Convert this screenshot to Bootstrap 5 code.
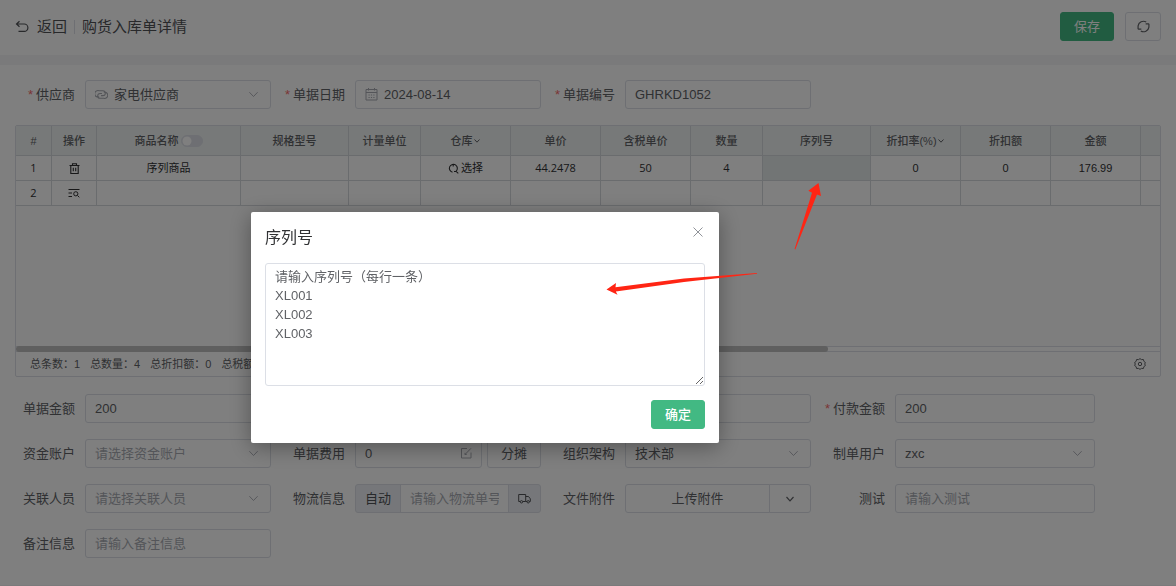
<!DOCTYPE html>
<html lang="zh-CN">
<head>
<meta charset="utf-8">
<meta name="viewport" content="width=device-width, initial-scale=1">
<title>购货入库单详情</title>
<link href="https://cdn.jsdelivr.net/npm/bootstrap@5.3.0/dist/css/bootstrap.min.css" rel="stylesheet">
<style>
  body { background: #f4f4f6; color: #606266; font-family: "Liberation Sans", "Noto Sans CJK SC", sans-serif; font-size: 13px; line-height: 19px; overflow-x: hidden; }
  svg { display: block; fill: none; stroke: currentColor; flex: none; }
  .topbar { height: 55px; padding: 0 15px 2px; font-size: 15px; }
  .topbar a { color: #505256; }
  .topbar h1 { font-size: 15px; font-weight: 400; color: #505256; }
  .topbar .btn-plain { width: 36px; margin-left: 11px; }
  .divider { width: 1px; height: 14px; background: #dcdfe6; margin: 0 7px; }
  .panel { margin-top: 10px; padding-top: 15px; min-height: calc(100vh - 66px); }
  .btn { --bs-btn-font-size: 13px; --bs-btn-padding-y: 0; --bs-btn-border-radius: 3px; height: 29px; line-height: 19px; }
  .btn-main { --bs-btn-bg: #42b983; --bs-btn-border-color: #42b983; --bs-btn-color: #fff; --bs-btn-hover-bg: #3aa876; --bs-btn-hover-color: #fff; width: 54px; padding: 0; }
  .btn-main.strong { font-weight: 500; }
  .btn-plain { --bs-btn-bg: #fff; --bs-btn-border-color: #dcdfe6; --bs-btn-color: #606266; --bs-btn-hover-bg: #f5f7fa; padding: 0; }
  .btn-split { width: 54px; }
  .btn-more { width: 42px; }
  .fields { display: grid; grid-template-columns: 257fr 257fr 257fr 271fr; column-gap: 13px; row-gap: 16px; padding: 0 81px 0 14px; }
  .field { display: flex; align-items: center; min-width: 0; }
  .field > label, .field > .caption { width: 71px; padding-right: 10px; text-align: right; white-space: nowrap; flex: none; }
  .field .body { flex: 1; min-width: 0; position: relative; }
  .need::before { content: "*"; color: #f56c6c; margin-right: 3px; }
  .form-control, .form-select { height: 29px; padding: 0 9px; border-color: #dcdfe6; border-radius: 3px; font-size: 13px; line-height: 19px; color: #606266; }
  .form-control::placeholder { color: #a8abb2; opacity: 1; }
  .form-select { background-image: url("data:image/svg+xml,%3Csvg xmlns='http://www.w3.org/2000/svg' viewBox='0 0 12 12'%3E%3Cpath d='M1.5 3.5 6 8.2l4.500-4.700' fill='none' stroke='%23a8abb2'/%3E%3C/svg%3E"); background-size: 11px 11px; background-position: right 11px center; }
  .form-select.empty { color: #a8abb2; }
  .prefixed { padding-left: 28px; }
  .lead-icon, .tail-icon { position: absolute; top: 8px; color: #a8abb2; pointer-events: none; }
  .lead-icon { left: 10px; }
  .tail-icon { right: 10px; }
  .input-group-text { font-size: 13px; line-height: 19px; padding: 0 9px; background: #eceff5; border-color: #dcdfe6; color: #505256; border-radius: 3px; }
  .sheet { margin: 16px 15px 17px; border: 1px solid #dcdfe6; font-size: 11px; line-height: 16px; border-radius: 2px; }
  .sheet-body { height: 220px; overflow: hidden; background: #fcfcfc; }
  .sheet table { table-layout: fixed; width: 100%; margin: 0; border-collapse: separate; border-spacing: 0; background: #fff; }
  .sheet th, .sheet td { padding: 0; text-align: center; vertical-align: middle; border-right: 1px solid #d5d8dd; border-bottom: 1px solid #d5d8dd; white-space: nowrap; }
  .sheet th:last-child, .sheet td:last-child { border-right: 0; }
  .sheet th { height: 30px; background: #eff3f2; font-weight: 500; color: #606266; }
  .sheet td { height: 25px; color: #303133; }
  .sheet .wide { font-family: "Open Sans", "Noto Sans CJK SC", sans-serif; }
  .sheet td.picked { background: #e4eaeb; }
  .sheet .tight { gap: 2px; }
  .sheet .form-check-input { width: 22px; height: 12px; margin: 0; border-color: #dcdfe6; background-color: #dcdfe6; background-image: url("data:image/svg+xml,%3Csvg xmlns='http://www.w3.org/2000/svg' viewBox='-4 -4 8 8'%3E%3Ccircle r='3.600' fill='%23fff'/%3E%3C/svg%3E"); }
  .w-a { width: 36px; } .w-b { width: 45px; } .w-c { width: 144px; } .w-d { width: 108px; } .w-e { width: 72px; } .w-f { width: 90px; }
  .track { height: 6px; border-top: 1px solid #dcdfe6; border-bottom: 1px solid #dcdfe6; }
  .thumb { width: 71%; height: 6px; margin-top: -1px; background: #bfbfbf; border-radius: 3px; }
  .totals { height: 24px; padding: 0 14px; gap: 10px; }
  .modal-backdrop { --bs-backdrop-opacity: .5; }
  .modal-dialog { max-width: 468px; margin: 212px 0 0 251px; }
  .modal-content { border: 0; border-radius: 2px; padding: 14px; gap: 14px; box-shadow: 0 4px 22px rgba(0, 0, 0, .35); }
  .modal-title { font-size: 16px; line-height: 23px; font-weight: 400; color: #303133; }
  .modal textarea.form-control { height: 123px; padding: 3px 9px; resize: vertical; }
  .shut { border: 0; background: none; padding: 0; margin-right: 1px; color: #909399; }
  .pointer { position: fixed; z-index: 1060; pointer-events: none; fill: #ff2514; stroke: none; }
  .pointer-up { left: 792px; top: 180px; }
  .pointer-left { left: 604px; top: 270px; }
</style>
</head>
<body>
<header class="topbar bg-white d-flex align-items-center">
  <a href="#" class="d-flex align-items-center text-decoration-none">
    <svg class="me-2" width="14" height="14" viewBox="0 0 14 14" stroke-width="1.200"><path d="M4.500 1.200 1.500 4l3 2.800M1.500 4h7.700a3.700 3.700 0 0 1 0 7.400H3.500"/></svg>返回</a>
  <span class="divider"></span>
  <h1 class="m-0">购货入库单详情</h1>
  <button class="btn btn-main ms-auto" type="button">保存</button>
  <button class="btn btn-plain d-flex align-items-center justify-content-center" type="button" aria-label="刷新">
    <svg width="13" height="13" viewBox="0 0 12 12" stroke-width="1.100"><path d="M1 8.500V5.500a5 5 0 0 1 7.500-3.600M11 3.500v3a5 5 0 0 1-7.500 3.600M8 3.500h3M4 8.500H1"/></svg>
  </button>
</header>

<main class="panel bg-white">
  <form class="fields">
    <div class="field"><label class="need" for="supplier">供应商</label><div class="body">
      <svg class="lead-icon" width="13" height="13" viewBox="0 0 14 14" stroke-width="1.100"><path d="M4.500 9.500A3.500 3.500 0 1 1 4.500 3h4a2.600 2.600 0 0 1 0 5.200H6.500M9.500 4.500a3.400 3.400 0 1 1 0 6.600h-4a2.600 2.600 0 0 1 0-5.200h2"/></svg>
      <select class="form-select prefixed" id="supplier"><option>家电供应商</option></select></div></div>
    <div class="field"><label class="need" for="billdate">单据日期</label><div class="body">
      <svg class="lead-icon" width="13" height="13" viewBox="0 0 13 13"><path d="M1 1.500h11v10.500H1zM1 4.500h11M3.500 0v2.500M9.500 0v2.500"/><path d="M3.500 7h6M3.500 9.500h6" stroke-dasharray="1.200 1.200"/></svg>
      <input class="form-control prefixed" id="billdate" value="2024-08-14"></div></div>
    <div class="field"><label class="need" for="billno">单据编号</label><div class="body"><input class="form-control" id="billno" value="GHRKD1052"></div></div>
  </form>

  <section class="sheet">
    <div class="sheet-body">
      <table>
        <colgroup><col class="w-a"><col class="w-b"><col class="w-c"><col class="w-d"><col class="w-e"><col class="w-f"><col class="w-f"><col class="w-f"><col class="w-e"><col class="w-d"><col class="w-f"><col class="w-f"><col class="w-f"><col></colgroup>
        <thead><tr>
          <th>#</th><th>操作</th>
          <th><span class="d-flex align-items-center justify-content-center form-switch p-0 tight"><label for="nameswitch">商品名称</label><input class="form-check-input" type="checkbox" role="switch" id="nameswitch"></span></th>
          <th>规格型号</th><th>计量单位</th>
          <th><span class="d-flex align-items-center justify-content-center">仓库<svg width="8" height="8" viewBox="0 0 8 8"><path d="M1.500 2.500 4 5.200l2.500-2.700"/></svg></span></th>
          <th>单价</th><th>含税单价</th><th>数量</th><th>序列号</th>
          <th><span class="d-flex align-items-center justify-content-center">折扣率(%)<svg width="8" height="8" viewBox="0 0 8 8"><path d="M1.500 2.500 4 5.200l2.500-2.700"/></svg></span></th>
          <th>折扣额</th><th>金额</th><th></th>
        </tr></thead>
        <tbody>
          <tr>
            <td class="wide">1</td>
            <td><svg class="mx-auto" width="11" height="11" viewBox="0 0 11 11" stroke-width="1.100"><path d="M.5 2.500h10M3.500 2.500V.8h4v1.700M1.800 2.500v8h7.400v-8M4.300 4.800v3.400M6.700 4.800v3.400"/></svg></td>
            <td>序列商品</td><td></td><td></td>
            <td><span class="d-flex align-items-center justify-content-center tight"><svg width="11" height="11" viewBox="0 0 11 11" stroke-width="1.100"><path d="M4.500 9.200A4 4 0 1 1 8 8.300L10.300 10.300M8 8.300 6 8.500M5.200 1.300v2.200"/></svg>选择</span></td>
            <td class="wide">44.2478</td><td class="wide">50</td><td class="wide">4</td><td class="picked"></td><td>0</td><td>0</td><td>176.99</td><td></td>
          </tr>
          <tr>
            <td class="wide">2</td>
            <td><svg class="mx-auto" width="12" height="10" viewBox="0 0 12 10"><path d="M.5 1.500h11M.5 5h3.500M.5 8.500h3.500M9.500 7.500l1.800 1.800"/><circle cx="7.800" cy="5.800" r="2.100"/></svg></td>
            <td></td><td></td><td></td><td></td><td></td><td></td><td></td><td></td><td></td><td></td><td></td><td></td>
          </tr>
        </tbody>
      </table>
    </div>
    <div class="track"><div class="thumb"></div></div>
    <div class="totals d-flex align-items-center">
      <span>总条数：1</span><span>总数量：4</span><span>总折扣额：0</span><span>总税额：</span>
      <svg class="ms-auto" width="12" height="12" viewBox="0 0 12 12"><path d="M4.600 1.600 6 .6l1.400 1 2-.1.500 1.900 1.500 1.100L10.700 6l.7 1.500-1.500 1.100-.5 1.900-2-.1-1.400 1-1.400-1-2 .1-.5-1.900L.6 7.500 1.300 6 .6 4.500l1.500-1.100.5-1.900z"/><circle cx="6" cy="6" r="1.700"/></svg>
    </div>
  </section>

  <form class="fields">
    <div class="field"><label for="amount">单据金额</label><div class="body"><input class="form-control" id="amount" value="200"></div></div>
    <div class="field"><span class="caption"></span><div class="body"><input class="form-control" aria-label="金额"></div></div>
    <div class="field"><span class="caption"></span><div class="body"><input class="form-control" aria-label="金额"></div></div>
    <div class="field"><label class="need" for="paid">付款金额</label><div class="body"><input class="form-control" id="paid" value="200"></div></div>

    <div class="field"><label for="account">资金账户</label><div class="body"><select class="form-select empty" id="account"><option>请选择资金账户</option></select></div></div>
    <div class="field"><label for="fee">单据费用</label><div class="body d-flex" style="gap:5px">
      <div class="position-relative flex-fill"><input class="form-control" id="fee" value="0">
        <svg class="tail-icon" width="12" height="12" viewBox="0 0 12 12"><path d="M7 1.500H1.500v9.500H11V5.500M5 7.500 11 1.300M5 5.800v1.700h1.700"/></svg></div>
      <button class="btn btn-plain btn-split flex-shrink-0" type="button">分摊</button></div></div>
    <div class="field"><label for="dept">组织架构</label><div class="body"><select class="form-select" id="dept"><option>技术部</option></select></div></div>
    <div class="field"><label for="maker">制单用户</label><div class="body"><select class="form-select" id="maker"><option>zxc</option></select></div></div>

    <div class="field"><label for="people">关联人员</label><div class="body"><select class="form-select empty" id="people"><option>请选择关联人员</option></select></div></div>
    <div class="field"><label for="ship">物流信息</label><div class="body input-group flex-nowrap">
      <button class="input-group-text" type="button">自动</button>
      <input class="form-control" id="ship" placeholder="请输入物流单号">
      <button class="input-group-text" type="button" aria-label="物流"><svg width="13" height="11" viewBox="0 0 13 11"><path d="M2 8.500H.7V1.500h7v7H5M7.700 3.500h2.800l1.800 2.300v2.700h-1M9 8.500H7.700"/><circle cx="3.500" cy="8.800" r="1.200"/><circle cx="10.200" cy="8.800" r="1.200"/></svg></button></div></div>
    <div class="field"><span class="caption">文件附件</span><div class="body btn-group">
      <button class="btn btn-plain" type="button">上传附件</button>
      <button class="btn btn-plain btn-more flex-grow-0 d-flex align-items-center justify-content-center" type="button" aria-label="更多"><svg width="10" height="10" viewBox="0 0 10 10" stroke-width="1.200"><path d="M1.500 3 5 6.800 8.500 3"/></svg></button></div></div>
    <div class="field"><label for="trial">测试</label><div class="body"><input class="form-control" id="trial" placeholder="请输入测试"></div></div>

    <div class="field"><label for="remark">备注信息</label><div class="body"><input class="form-control" id="remark" placeholder="请输入备注信息"></div></div>
  </form>
</main>

<div class="modal-backdrop show"></div>
<div class="modal d-block" role="dialog" aria-modal="true" aria-labelledby="serial-title">
  <div class="modal-dialog">
    <div class="modal-content">
      <div class="d-flex align-items-start justify-content-between">
        <h2 class="modal-title m-0" id="serial-title">序列号</h2>
        <button class="shut" type="button" aria-label="关闭"><svg width="12" height="12" viewBox="0 0 12 12"><path d="m1.500 1.500 9 9M10.500 1.500l-9 9"/></svg></button>
      </div>
      <textarea class="form-control" aria-labelledby="serial-title">请输入序列号（每行一条）
XL001
XL002
XL003</textarea>
      <button class="btn btn-main strong align-self-end" type="button">确定</button>
    </div>
  </div>
</div>

<svg class="pointer pointer-up" width="32" height="72" viewBox="0 0 32 72"><path d="M26.500 3 29 16l-4-1.500L3.300 69.500 2.600 69 20 12.700l-3.700-2z"/></svg>
<svg class="pointer pointer-left" width="156" height="28" viewBox="0 0 156 28"><path d="M2.500 19.500 12 13l-.5 4.200L80 8.500l73-5.500v.8L80 12l-68.200 9.500 1.700 3.200z"/></svg>
<script src="https://cdn.jsdelivr.net/npm/bootstrap@5.3.0/dist/js/bootstrap.bundle.min.js"></script>
</body>
</html>
